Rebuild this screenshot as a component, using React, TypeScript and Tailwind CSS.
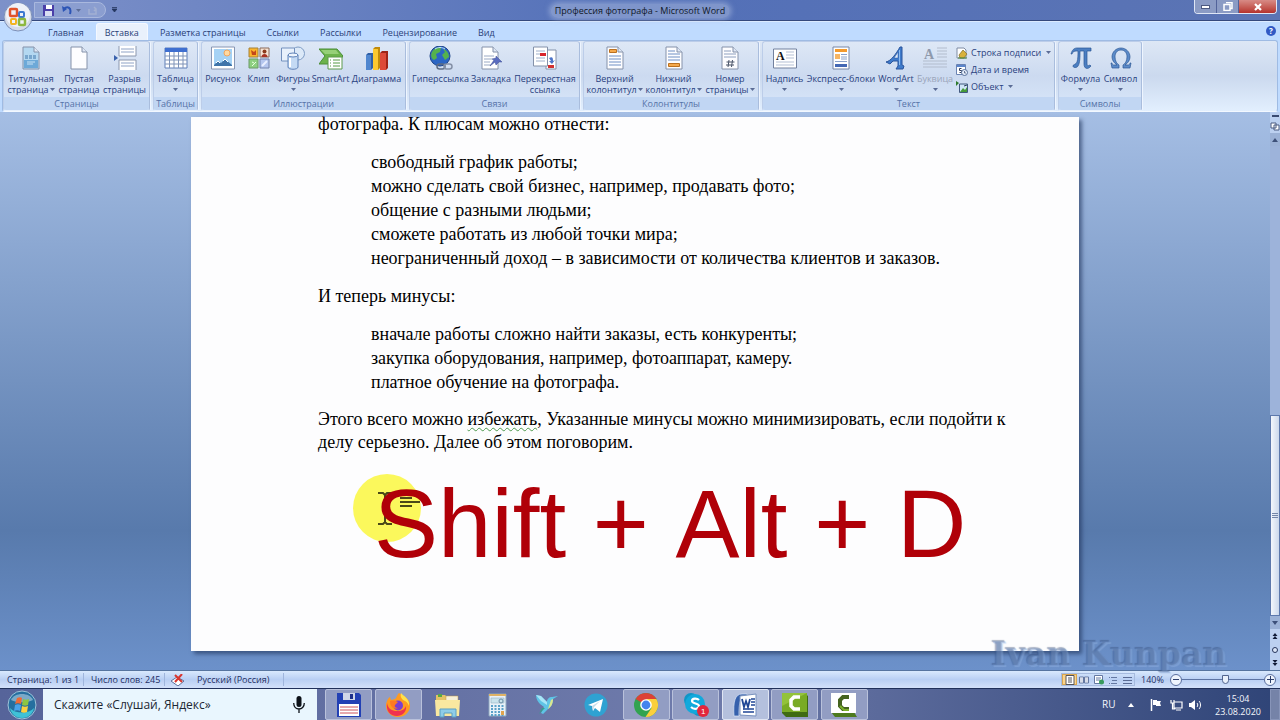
import React, { useState } from "react";

type RibbonItem = {
  icon: React.ReactNode;
  lines: string[];
  width: string;
  arrow?: boolean;
  disabled?: boolean;
};

type RibbonGroupProps = {
  title: string;
  items: RibbonItem[];
  children?: React.ReactNode;
};

/* ---------- Ribbon icons ---------- */

const Svg: React.FC<{ children: React.ReactNode }> = ({ children }) => (
  <svg viewBox="0 0 24 24" className="w-6 h-6" aria-hidden="true">
    {children}
  </svg>
);

const Sheet: React.FC<{ fill?: string; children?: React.ReactNode }> = ({
  fill = "#fdfdff",
  children,
}) => (
  <Svg>
    <path d="M4 1h11l5 5v17H4z" fill={fill} stroke="#8592aa" />
    <path d="M15 1v5h5" fill="#dfe7f5" stroke="#8592aa" />
    {children}
  </Svg>
);

const CoverIcon = () => (
  <Sheet fill="#b4d8f1">
    <path d="M5 14h14v8H5z" fill="#6da9d8" />
    <path d="M6 10h12M6 12h12" stroke="#3f76ab" strokeDasharray="3 1" />
    <path d="M8 16h8M8 18h6" stroke="#c9e2f5" />
  </Sheet>
);

const BreakIcon = () => (
  <Svg>
    <path d="M6 0v10h17V0M6 24V14h17v10" fill="#fff" stroke="#8b97ae" />
    <path d="M8 3h13M8 6h13M8 17h13M8 20h13" stroke="#8fa3c6" />
    <path d="M1 9l4 3-4 3z" fill="#3a62ad" />
  </Svg>
);

const TableIcon = () => (
  <Svg>
    <path d="M1 2h22v20H1z" fill="#fff" stroke="#5f7fb8" />
    <path d="M1 2h22v4H1z" fill="#3f6fd0" />
    <path d="M1 10h22M1 14h22M1 18h22M5.500 6v16M10 6v16M14.500 6v16M19 6v16" stroke="#7e93b8" />
  </Svg>
);

const PictureIcon = () => (
  <Svg>
    <path d="M.5 1h23v22H.5z" fill="#fff" stroke="#8896b3" />
    <path d="M3 3h18v17H3z" fill="#a5d2f5" />
    <circle cx="16" cy="7" r="3" fill="#ffd9a0" stroke="#f2a65e" />
    <path d="M3 19l4-4 3 2 4-4 7 6v1H3z" fill="#3f74a9" />
    <path d="M5 17l2-2 2 2M12 15l2-2 3 3" stroke="#fff" fill="none" />
  </Svg>
);

const ClipIcon = () => (
  <Svg>
    <path d="M2 2h9v9H2z" fill="#fbb52d" stroke="#a5823b" />
    <path d="M4 4l3 2 2-2v5H5z" fill="#c3471b" />
    <path d="M13 2h9v9h-9z" fill="#f5e3d3" stroke="#8b6a5a" />
    <circle cx="17.500" cy="5.500" r="2" fill="#8c3b1c" />
    <path d="M14.500 11c0-4 6-4 6 0z" fill="#a83222" />
    <path d="M2 13h9v9H2z" fill="#8dcf80" stroke="#6d9a68" />
    <path d="M5 20l4-4M5 16l2 1" stroke="#e8ffe0" />
    <path d="M13 13h9v9h-9z" fill="#b5c6ee" stroke="#7484ad" />
    <path d="M15 20l5-5" stroke="#e9efff" strokeWidth="2" />
  </Svg>
);

const ShapesIcon = () => (
  <Svg>
    <circle cx="17" cy="7.500" r="6.500" fill="#dce9f8" stroke="#7f9cc4" />
    <path d="M.5 2h13v13H.5z" fill="#e8f1fc" stroke="#7390bd" />
    <path d="M7 9v12c0 3 10 3 10 0V9" fill="#c4daf4" stroke="#5f82b8" />
    <ellipse cx="12" cy="9" rx="5" ry="2" fill="#eef5fd" stroke="#5f82b8" />
    <path d="M9 12v9" stroke="#fff" strokeWidth="2" />
  </Svg>
);

const SmartArtIcon = () => (
  <Svg>
    <path d="M0 3h18l6 7-6 8H0l6-8z" fill="#6cb34c" stroke="#4a8d35" />
    <path d="M2 4h15l3 4H6z" fill="#96d078" />
    <path d="M9 11h14v12H9z" fill="#fff" stroke="#5d9a4c" />
    <path d="M11 14h1M14 14h7M11 17h1M14 17h7M11 20h1M14 20h7" stroke="#559a45" />
  </Svg>
);

const ChartIcon = () => (
  <Svg>
    <path d="M1 9l2-2h5v15l-2 2H1z" fill="#2f5fa5" />
    <path d="M1 9h5v15H1z" fill="#4f86cf" />
    <path d="M8 3l2-2h5v21l-2 2H8z" fill="#c28b0a" />
    <path d="M8 3h5v21H8z" fill="#fbc930" />
    <path d="M15 7l2-2h6v17l-2 2h-6z" fill="#9e2317" />
    <path d="M15 7h6v17h-6z" fill="#dd4938" />
  </Svg>
);

const LinkIcon = () => (
  <Svg>
    <circle cx="11" cy="10" r="10" fill="#2c66c4" stroke="#20468a" />
    <path d="M3 6c3-5 7-5 9-4l-1 4-4 2 1 4-3 2C3 13 1 10 3 6zM14 3c4 1 6 5 6 8l-4 3-3-5 3-3z" fill="#55b24c" />
    <path d="M6 3c3-2 7-2 10 0" stroke="#bfe3ff" fill="none" />
    <rect x="8" y="18" width="8" height="5" rx="2.500" fill="none" stroke="#5e6c83" strokeWidth="1.500" />
    <rect x="15" y="18" width="8" height="5" rx="2.500" fill="none" stroke="#8490a6" strokeWidth="1.500" />
  </Svg>
);

const BookmarkIcon = () => (
  <Svg>
    <path d="M3 1h11l5 5v17H3z" fill="#fff" stroke="#8592aa" />
    <path d="M14 1v5h5" fill="#dfe7f5" stroke="#8592aa" />
    <path d="M5 10h10M5 13h8M5 16h6M5 19h7" stroke="#9aa9c4" />
    <path d="M17 10l6 6-3 0-3 3-1-3-5 4 4-6-2-1 4-1z" fill="#5a6cc0" stroke="#3d4c95" strokeWidth=".5" />
  </Svg>
);

const CrossRefIcon = () => (
  <Svg>
    <path d="M13 4h10v19H13z" fill="#fff" stroke="#8592aa" />
    <path d="M16 12c4-2 4 1 4 3l2-1-3 4-3-3 2 0" fill="#4d74c9" />
    <path d="M15 19h6v3h-6z" fill="#d03030" />
    <path d="M.5 1h14v19H.5z" fill="#fff" stroke="#8592aa" />
    <path d="M3 5h9M3 12h9M3 15h9M3 8h4" stroke="#9fb0cb" />
    <path d="M7 7h6v3H7z" fill="#d8262c" />
  </Svg>
);

const HeaderIcon = () => (
  <Sheet>
    <path d="M6.500 3.500h7v3h-7z" fill="#f5a94c" stroke="#bb701f" />
    <path d="M6 10h12M6 13h12M6 16h12M6 19h12" stroke="#6f8fc4" />
  </Sheet>
);

const FooterIcon = () => (
  <Sheet>
    <path d="M6 5h7M6 8h12M6 11h12M6 14h12" stroke="#6f8fc4" />
    <path d="M6.500 17.500h11v3h-11z" fill="#f5a94c" stroke="#bb701f" />
  </Sheet>
);

const PageNumberIcon = () => (
  <Sheet>
    <path d="M6 5h7M6 8h12M6 11h12" stroke="#8ea0bf" />
    <path d="M11 14l-1 7M14.500 14l-1 7M8.500 16h8M8 19h8" stroke="#4a5468" fill="none" />
  </Sheet>
);

const TextBoxIcon = () => (
  <Svg>
    <path d="M.5 3h23v19H.5z" fill="#fff" stroke="#72819e" />
    <path d="M13 6h8M13 9h8M13 12h8M3 16h18M3 19h18" stroke="#b3bfd4" />
    <text x="3" y="14" fontSize="12" fontWeight="bold" fontFamily="Liberation Serif, serif" fill="#111">
      А
    </text>
  </Svg>
);

const QuickPartsIcon = () => (
  <Svg>
    <path d="M4 1h16v22H4z" fill="#fff" stroke="#7687a8" />
    <path d="M6 3h12v3H6z" fill="#f39a2d" />
    <path d="M6 8h5v5H6z" fill="#f6b564" />
    <path d="M12 8.500h6M12 11h6M12 13h6M6 15.500h12" stroke="#8aa2cb" />
    <path d="M6 18h12v3H6z" fill="#4468b4" />
  </Svg>
);

const WordArtIcon = () => (
  <Svg>
    <path d="M2 16c5-1 10-8 14-15h2v18l2 1-1 3h-7l2-3v-5H9l-3 3z" fill="#3f7bcb" stroke="#2b559c" />
    <path d="M10 12h4V6z" fill="#e1ecfa" stroke="#2b559c" strokeWidth=".5" />
    <path d="M15.500 4v15" stroke="#8dbbf0" />
  </Svg>
);

const DropCapIcon = () => (
  <Svg>
    <path d="M14 2h10M14 5h10M14 8h10M14 11h10M0 15h24M0 18h24M0 21h24" stroke="#b2bccd" />
    <text x="1" y="13" fontSize="14" fontWeight="bold" fontFamily="Liberation Serif, serif" fill="#8e99ac">
      А
    </text>
  </Svg>
);

const PiIcon = () => (
  <Svg>
    <path
      d="M2 8c1-4 3-6 6-6h14v3h-4v13c0 2 1 2 3 1l1 1c-3 4-7 3-7-2V5h-4c0 6 0 12-2 15-1 2-5 2-5 0 0-2 3-1 4-4 1-3 1-7 1-11-3 0-5 0-6 3z"
      fill="#4c7fc2"
      stroke="#2d5795"
      strokeWidth=".7"
    />
  </Svg>
);

const OmegaIcon = () => (
  <Svg>
    <path
      d="M2 17h1c0 2 1 2 3 2h2c-3-2-5-5-5-8 0-5 4-9 9-9s9 4 9 9c0 3-2 6-5 8h2c2 0 3 0 3-2h1l-1 5h-7v-3c2-1 4-4 4-8 0-4-2-7-6-7s-6 3-6 7c0 4 2 7 4 8v3H3z"
      fill="#5c8bc9"
      stroke="#2d5795"
      strokeWidth=".7"
    />
  </Svg>
);

const SignatureIcon = () => (
  <svg viewBox="0 0 12 12" className="w-3 h-3" aria-hidden="true">
    <path d="M1 1h7l2 2v8H1z" fill="#fff" stroke="#7f8ba3" />
    <path d="M3 8l4-5 4 4-3 4H4z" fill="#d8b13c" stroke="#7c6a2a" strokeWidth=".7" />
    <path d="M2 11h9" stroke="#4d8a3d" />
  </svg>
);

const DateIcon = () => (
  <svg viewBox="0 0 12 12" className="w-3 h-3" aria-hidden="true">
    <path d="M.5.5h9v10h-9z" fill="#fff" stroke="#6a83b3" />
    <path d="M1 1h8v2H1z" fill="#5b85cc" />
    <path d="M5.500 4.500H3.500v2h2v2h-2" stroke="#2f3f60" fill="none" />
    <circle cx="8.500" cy="8.500" r="3" fill="#e4edfa" stroke="#587199" />
    <path d="M8.500 7v2h1.500" stroke="#33466b" fill="none" strokeWidth=".7" />
  </svg>
);

const ObjectIcon = () => (
  <svg viewBox="0 0 12 12" className="w-3 h-3" aria-hidden="true">
    <path d="M3.500 3h8v8.500h-8z" fill="#cfe5f7" stroke="#41597f" />
    <path d="M4 11l3-4 2 2 2-3v5z" fill="#469a38" />
    <path d="M0 0l3 2-3 3z" fill="#2d7a2c" />
    <path d="M8 5l3-1" stroke="#2c3e59" />
  </svg>
);

/* ---------- Ribbon data ---------- */

const tabs = [
  "Главная",
  "Вставка",
  "Разметка страницы",
  "Ссылки",
  "Рассылки",
  "Рецензирование",
  "Вид",
];

const pageItems: RibbonItem[] = [
  { icon: <CoverIcon />, lines: ["Титульная", "страница"], width: "w-[52px]", arrow: true },
  { icon: <Sheet />, lines: ["Пустая", "страница"], width: "w-[44px]" },
  { icon: <BreakIcon />, lines: ["Разрыв", "страницы"], width: "w-[47px]" },
];

const tableItems: RibbonItem[] = [
  { icon: <TableIcon />, lines: ["Таблица"], width: "w-[41px]", arrow: true },
];

const pictureItems: RibbonItem[] = [
  { icon: <PictureIcon />, lines: ["Рисунок"], width: "w-[40px]" },
  { icon: <ClipIcon />, lines: ["Клип"], width: "w-[31px]" },
  { icon: <ShapesIcon />, lines: ["Фигуры"], width: "w-[38px]", arrow: true },
  { icon: <SmartArtIcon />, lines: ["SmartArt"], width: "w-[37px]" },
  { icon: <ChartIcon />, lines: ["Диаграмма"], width: "w-[55px]" },
];

const linkItems: RibbonItem[] = [
  { icon: <LinkIcon />, lines: ["Гиперссылка"], width: "w-[59px]" },
  { icon: <BookmarkIcon />, lines: ["Закладка"], width: "w-[42px]" },
  { icon: <CrossRefIcon />, lines: ["Перекрестная", "ссылка"], width: "w-[66px]" },
];

const headerItems: RibbonItem[] = [
  { icon: <HeaderIcon />, lines: ["Верхний", "колонтитул"], width: "w-[59px]", arrow: true },
  { icon: <FooterIcon />, lines: ["Нижний", "колонтитул"], width: "w-[59px]", arrow: true },
  { icon: <PageNumberIcon />, lines: ["Номер", "страницы"], width: "w-[54px]", arrow: true },
];

const textItems: RibbonItem[] = [
  { icon: <TextBoxIcon />, lines: ["Надпись"], width: "w-[41px]", arrow: true },
  { icon: <QuickPartsIcon />, lines: ["Экспресс-блоки"], width: "w-[72px]", arrow: true },
  { icon: <WordArtIcon />, lines: ["WordArt"], width: "w-[38px]", arrow: true },
  { icon: <DropCapIcon />, lines: ["Буквица"], width: "w-[40px]", arrow: true, disabled: true },
];

const symbolItems: RibbonItem[] = [
  { icon: <PiIcon />, lines: ["Формула"], width: "w-[41px]", arrow: true },
  { icon: <OmegaIcon />, lines: ["Символ"], width: "w-[39px]", arrow: true },
];

const smallItems = [
  { icon: <SignatureIcon />, label: "Строка подписи", arrow: true },
  { icon: <DateIcon />, label: "Дата и время", arrow: false },
  { icon: <ObjectIcon />, label: "Объект", arrow: true },
];

/* ---------- Ribbon ---------- */

const Arrow = () => (
  <svg viewBox="0 0 5 3" className="w-[5px] h-[3px] shrink-0" aria-hidden="true">
    <path d="M0 0h5L2.500 3z" fill="#5b6c96" />
  </svg>
);

const RibbonButton: React.FC<{ item: RibbonItem }> = ({ item }) => {
  const { icon, lines, width, arrow, disabled } = item;
  return (
    <button
      type="button"
      disabled={disabled}
      className={`${width} flex flex-col items-center shrink-0 pt-1 whitespace-nowrap ${
        disabled ? "text-[#9aa5ba]" : "text-[#2a4280]"
      }`}
    >
      {icon}
      <span className="mt-[3px] leading-[11px]">{lines[0]}</span>
      <span className="flex items-center gap-px h-[11px] leading-[11px]">
        {lines[1]}
        {arrow && <Arrow />}
      </span>
    </button>
  );
};

const RibbonGroup: React.FC<RibbonGroupProps> = ({ title, items, children }) => (
  <section className="flex flex-col rounded-[3px] border border-[#bccde9] border-r-[#a9bddd] border-b-[#e8f1fd] bg-linear-to-b from-[#dee8f6] via-[#ccdaf0] to-[#d8e7fa] overflow-hidden shadow-[1px_0_0_#eef5ff]">
    <div className="flex flex-1 min-h-0 px-px">
      {items.map((item) => (
        <RibbonButton key={item.lines.join(" ")} item={item} />
      ))}
      {children}
    </div>
    <h2 className="h-[13px] shrink-0 bg-[#c1d6f3] text-center leading-[13px] text-[#5673a8]">{title}</h2>
  </section>
);

/* ---------- Taskbar icons ---------- */

const AppSvg: React.FC<{ children: React.ReactNode }> = ({ children }) => (
  <svg viewBox="0 0 26 26" className="w-[26px] h-[26px]" aria-hidden="true">
    {children}
  </svg>
);

const taskButtons = [
  {
    name: "Total Commander",
    open: true,
    icon: (
      <AppSvg>
        <path d="M1 1h22l2 2v22H1z" fill="#2240b4" />
        <path d="M7 1h12v7H7z" fill="#cfd6e8" />
        <path d="M14 2h3v5h-3z" fill="#1d2f8a" />
        <path d="M3 12h20v12H3z" fill="#fff" />
        <path d="M4 15h18M4 18h18M4 21h18" stroke="#d0555c" />
      </AppSvg>
    ),
  },
  {
    name: "Firefox",
    open: true,
    icon: (
      <AppSvg>
        <path d="M14 1c7 4 11 7 11 13a12 11 0 0 1-24 0c0-4 2-8 4-9l1 3 4-1c1 0 2-4 4-6z" fill="#ff9a1f" />
        <path d="M16 1c2 3 9 5 8 13-1-3-3-5-6-6-2-2-3-4-2-7z" fill="#ffe04a" />
        <path d="M2 11c1 6 5 8 10 8s8-2 9-5c1 6-4 10-9 10C5 24 1 19 2 11z" fill="#f0324f" />
        <circle cx="13" cy="13.500" r="5" fill="#7a3fd0" />
        <path d="M5 9c4-1 6 0 8 1l-3 3c-1 2 1 3 3 3-4 2-8-1-8-7z" fill="#ff7a22" />
      </AppSvg>
    ),
  },
  {
    name: "Проводник",
    open: false,
    icon: (
      <AppSvg>
        <path d="M1 3h9l2 2h11v19H1z" fill="#e3c365" />
        <path d="M3 2h4v3H3z" fill="#58a945" />
        <path d="M11 4h12v5H11z" fill="#f6f0d9" stroke="#c09b46" strokeWidth=".5" />
        <path d="M0 8h25l-1 16H1z" fill="#f9e8a0" />
        <path d="M5 25v-8h16v8h-4v-4H9v4z" fill="#8fcde8" stroke="#5ba0c4" />
      </AppSvg>
    ),
  },
  {
    name: "Калькулятор",
    open: false,
    icon: (
      <AppSvg>
        <path d="M5 2h17v22H5z" fill="#e8f1f8" stroke="#8da6bd" />
        <path d="M5 2h17v2H5z" fill="#dfb265" />
        <path d="M7 6h13v5H7z" fill="#c9e3ec" stroke="#88a5b8" strokeWidth=".5" />
        <circle cx="17" cy="9" r="2" fill="none" stroke="#6b8da5" />
        <path d="M7 14h13M7 17h13M7 20h13M7 23h13" stroke="#5aa0c8" strokeWidth="2" strokeDasharray="2 1.500" />
        <path d="M17 19h3v4h-3z" fill="#e0a44e" />
      </AppSvg>
    ),
  },
  {
    name: "Колибри",
    open: false,
    icon: (
      <AppSvg>
        <path d="M2 3l5 1 6 6c0-3 2-5 5-5l6-1-5 3c0 5-2 8-5 10l-5 5-2-1 3-6-4-3C4 10 2 7 2 3z" fill="#5fc4e6" />
        <path d="M2 3l5 1 6 6 0 3-6-4z" fill="#a9e6f7" />
        <path d="M17 8l2-1c0 5-2 8-5 10z" fill="#dbe68d" />
        <path d="M11 16l-6 6 3-6z" fill="#35a08d" />
      </AppSvg>
    ),
  },
  {
    name: "Telegram",
    open: false,
    icon: (
      <AppSvg>
        <circle cx="13" cy="13" r="11.500" fill="#2fa2d2" />
        <path d="M5 13l15-6-3 13-5-4-2 3-1-5z" fill="#fff" />
        <path d="M9 14l8-5-6 6-1 4z" fill="#c5dcea" />
      </AppSvg>
    ),
  },
  {
    name: "Chrome",
    open: true,
    icon: (
      <AppSvg>
        <circle cx="13" cy="13" r="12" fill="#31a350" />
        <path d="M13 13L2.600 7A12 12 0 0 1 23.400 7z" fill="#dd4136" />
        <path d="M13 7h10.400A12 12 0 0 1 12.500 25l6-9z" fill="#fbcf3b" />
        <circle cx="13" cy="13" r="5.800" fill="#fff" />
        <circle cx="13" cy="13" r="4.400" fill="#4484ee" />
      </AppSvg>
    ),
  },
  {
    name: "Skype",
    open: true,
    icon: (
      <AppSvg>
        <circle cx="8" cy="8" r="7" fill="#0f96c7" />
        <circle cx="16" cy="17" r="7" fill="#0f96c7" />
        <circle cx="12" cy="12" r="10" fill="#12a9dc" />
        <path d="M16 8c-2-2-7-2-7 1s7 2 7 5-5 4-8 1" stroke="#fff" strokeWidth="2.200" fill="none" />
        <circle cx="20" cy="19" r="6" fill="#e3263c" />
        <text x="18" y="22" fontSize="8" fontFamily="Liberation Sans, sans-serif" fill="#fff">
          1
        </text>
      </AppSvg>
    ),
  },
  {
    name: "Word",
    open: true,
    icon: (
      <AppSvg>
        <path d="M2 24C1 10 3 2 10 2h5v3c-7 0-8 4-8 19z" fill="#3560ac" stroke="#dbe6f8" strokeWidth=".7" />
        <path d="M8 4l16-2v22l-16-1z" fill="#fff" stroke="#7790bd" />
        <path d="M10 7l2 8 2-6 2 6 2-8" stroke="#1f4695" strokeWidth="1.800" fill="none" />
        <path d="M19 7h4M19 10h4M19 13h4M11 17h11M11 20h11" stroke="#1f4695" strokeWidth="1.500" />
      </AppSvg>
    ),
  },
  {
    name: "Camtasia",
    open: true,
    icon: (
      <AppSvg>
        <path d="M0 1h22l4 3v21H4l-4-4z" fill="#3f6b12" />
        <path d="M0 1h25v19H0z" fill="#79ab25" />
        <path d="M0 1h25L0 14z" fill="#93c23a" />
        <path d="M18 5h-6l-3 3v6l3 3h6" stroke="#fff" strokeWidth="3.500" fill="none" />
      </AppSvg>
    ),
  },
  {
    name: "Camtasia Recorder",
    open: true,
    icon: (
      <AppSvg>
        <path d="M0 20l4 5h22l-3-5z" fill="#4c7a1d" />
        <path d="M0 1h25v20H0z" fill="#fff" />
        <path d="M18 5h-6l-3 3v6l3 3h6" stroke="#45631f" strokeWidth="4" fill="none" />
        <path d="M9 14l4 4h5" stroke="#7bb02a" strokeWidth="2" fill="none" />
      </AppSvg>
    ),
  },
];

/* ---------- Window parts ---------- */

const TitleBar = () => (
  <header className="relative h-5 shrink-0 flex items-start bg-linear-to-r from-[#7d91c9] via-[#5370b8] to-[#5b74b4]">
    <button type="button" aria-label="Кнопка Office" className="absolute z-10 left-[3px] top-[2px] w-[30px] h-[30px]">
      <svg viewBox="0 0 30 30" className="w-full h-full">
        <circle cx="15" cy="15" r="14" fill="#d5dbe8" stroke="#7b8fb8" />
        <circle cx="15" cy="13" r="12" fill="#eef1f8" />
        <rect x="7" y="7" width="7" height="7" rx="1" fill="none" stroke="#e0532a" strokeWidth="2.500" />
        <rect x="16" y="10" width="5" height="5" rx="1" fill="none" stroke="#3d78d0" strokeWidth="2" />
        <rect x="8" y="17" width="5" height="5" rx="1" fill="none" stroke="#f3b31e" strokeWidth="2" />
        <rect x="16" y="17" width="6" height="6" rx="1" fill="none" stroke="#8db83f" strokeWidth="2.500" />
      </svg>
    </button>
    <div className="ml-[34px] mt-[2px] pl-2 pr-2 h-4 w-[72px] flex items-center justify-between rounded-r-full border border-[#a9b8de] bg-[#8b9ed0]">
      <button type="button" aria-label="Сохранить">
        <svg viewBox="0 0 11 11" className="w-[11px] h-[11px]">
          <path d="M0 0h11v11H0z" fill="#4a3fa8" />
          <path d="M3 0h6v4H3z" fill="#fff" />
          <path d="M2 6h7v5H2z" fill="#d9def2" />
        </svg>
      </button>
      <button type="button" aria-label="Отменить" className="flex items-center gap-1">
        <svg viewBox="0 0 10 10" className="w-[10px] h-[10px]">
          <path d="M2 4c3-3 8-2 6 5" fill="none" stroke="#2d55b5" strokeWidth="2" />
          <path d="M0 1l1 6 4-3z" fill="#2d55b5" />
        </svg>
        <Arrow />
      </button>
      <button type="button" aria-label="Вернуть">
        <svg viewBox="0 0 9 9" className="w-[9px] h-[9px]">
          <path d="M1 3v5h7V3M6 1l2 2-2 2" fill="none" stroke="#a3b0d2" strokeWidth="1.500" />
        </svg>
      </button>
    </div>
    <button type="button" aria-label="Настройка панели" className="ml-[6px] mt-[7px]">
      <svg viewBox="0 0 5 5" className="w-[5px] h-[5px]">
        <path d="M0 .5h5M0 2h5L2.500 5z" stroke="#24365f" strokeWidth=".8" fill="#24365f" />
      </svg>
    </button>
    <h1 className="absolute left-1/2 top-1 -translate-x-1/2 px-1 leading-[14px] text-[#101828] rounded-full bg-[#a9b9de]/50 shadow-[0_0_5px_2px_rgba(176,192,228,0.5)] whitespace-nowrap">
      Профессия фотографа - Microsoft Word
    </h1>
    <div className="ml-auto mr-[3px] flex h-[14px] rounded-b border border-t-0 border-[#dfe6f5] overflow-hidden">
      <button type="button" aria-label="Свернуть" className="w-[22px] flex items-center justify-center bg-[#8b9bc4] border-r border-[#52639a]">
        <span className="w-[9px] h-[4px] bg-white border border-[#4d5a80]" />
      </button>
      <button type="button" aria-label="Развернуть" className="w-[22px] flex items-center justify-center bg-[#8b9bc4] border-r border-[#52639a]">
        <svg viewBox="0 0 10 9" className="w-[10px] h-[9px]">
          <path d="M3 .5h6v6H7M1 2.500h6v6H1z" fill="none" stroke="#fff" strokeWidth="1.500" />
        </svg>
      </button>
      <button type="button" aria-label="Закрыть" className="w-[37px] flex items-center justify-center bg-linear-to-b from-[#d78b86] to-[#b5302c]">
        <svg viewBox="0 0 8 8" className="w-2 h-2">
          <path d="M1 1l6 6M7 1L1 7" stroke="#fff" strokeWidth="2.200" />
        </svg>
      </button>
    </div>
  </header>
);

const Ribbon = () => {
  const [active, setActive] = useState("Вставка");

  return (
    <div className="shrink-0 bg-[#bfdbff] border-t border-[#35497c]">
      <nav className="flex items-end h-[19px] pl-[39px] pr-1 gap-[3px] border-t border-[#dcebff] text-[#2b3f78]">
        {tabs.map((tab) => (
          <button
            key={tab}
            type="button"
            onClick={() => setActive(tab)}
            className={`h-[17px] px-2 leading-[15px] border border-b-0 rounded-t-[3px] ${
              tab === active ? "bg-[#e9f1fc] border-[#f4f8ff]" : "border-transparent"
            }`}
          >
            {tab}
          </button>
        ))}
        <button type="button" aria-label="Справка" className="ml-auto mb-1 w-[10px] h-[10px] rounded-full bg-[#3159c4] text-white text-[8px] leading-[10px] font-bold">
          ?
        </button>
      </nav>
      <div className="mx-[2px] flex h-[72px] gap-[3px] rounded-[3px] border border-[#9fbbe3] border-b-[#f2f8ff] bg-linear-to-b from-[#dde7f5] via-[#cbd9ee] to-[#e2effe]">
        <RibbonGroup title="Страницы" items={pageItems} />
        <RibbonGroup title="Таблицы" items={tableItems} />
        <RibbonGroup title="Иллюстрации" items={pictureItems} />
        <RibbonGroup title="Связи" items={linkItems} />
        <RibbonGroup title="Колонтитулы" items={headerItems} />
        <RibbonGroup title="Текст" items={textItems}>
          <div className="flex flex-col w-[98px] pl-px pt-[2px] text-[#2a4280]">
            {smallItems.map((item) => (
              <button key={item.label} type="button" className="flex items-center gap-[3px] h-[17px] whitespace-nowrap">
                {item.icon}
                {item.label}
                {item.arrow && (
                  <span className="pl-[2px]">
                    <Arrow />
                  </span>
                )}
              </button>
            ))}
          </div>
        </RibbonGroup>
        <RibbonGroup title="Символы" items={symbolItems} />
      </div>
    </div>
  );
};

const DocumentPage = () => (
  <article className="relative mx-auto w-[888px] mt-[5px] mb-[19px] pl-[127px] pr-[60px] bg-[#fdfdfe] shadow-[3px_3px_4px_rgba(35,55,95,0.65)] font-['Liberation_Serif',serif] text-[18px] leading-6 text-black">
    <p className="-mt-[5px] mb-[14px]">фотографа. К плюсам можно отнести:</p>
    <ul className="pl-[53px] mb-[14px]">
      <li>свободный график работы;</li>
      <li>можно сделать свой бизнес, например, продавать фото;</li>
      <li>общение с разными людьми;</li>
      <li>сможете работать из любой точки мира;</li>
      <li>неограниченный доход – в зависимости от количества клиентов и заказов.</li>
    </ul>
    <p className="mb-[14px]">И теперь минусы:</p>
    <ul className="pl-[53px] mb-[14px]">
      <li>вначале работы сложно найти заказы, есть конкуренты;</li>
      <li>закупка оборудования, например, фотоаппарат, камеру.</li>
      <li>платное обучение на фотографа.</li>
    </ul>
    <p className="leading-[23px]">
      Этого всего можно{" "}
      <span className="underline decoration-wavy decoration-[#4d9a4d] decoration-1 underline-offset-2">избежать</span>,
      Указанные минусы можно минимизировать, если подойти к делу серьезно. Далее об этом поговорим.
    </p>

    {/* Mouse highlight and shortcut caption */}
    <div className="absolute left-[162px] top-[357px] w-[68px] h-[68px] rounded-full bg-[#fbf85c]">
      <svg viewBox="0 0 68 68" className="w-full h-full overflow-visible" aria-hidden="true">
        <path d="M25 19h5l2 2 2-2h5M25 50h5l2-2 2 2h5M32 21v27" fill="none" stroke="#4a4818" strokeWidth="2" />
        <path d="M47 24h12M47 28h20M47 32h12" stroke="#4a4818" strokeWidth="2" />
      </svg>
    </div>
    <p className="absolute left-[183px] top-[352px] font-['Liberation_Sans',sans-serif] text-[96px] leading-[110px] [font-kerning:none] text-[#b00008] whitespace-nowrap">
      Shift + Alt + D
    </p>
  </article>
);

const ScrollBar = () => (
  <aside className="w-[10px] shrink-0 flex flex-col items-center bg-[#bcd0f0] text-[#1d2c52]">
    <span className="mt-[3px] w-[7px] h-[2px] bg-[#3a4a70]" />
    <button type="button" aria-label="Линейка" className="mt-1">
      <svg viewBox="0 0 10 10" className="w-[10px] h-[10px]">
        <path d="M1 2h5v5H1zM4 4h5v5H4z" fill="#fff" stroke="#4b5b80" />
      </svg>
    </button>
    <button type="button" aria-label="Вверх" className="mt-[2px] w-full h-[13px] flex items-center justify-center bg-[#9bb1d6]">
      <svg viewBox="0 0 6 4" className="w-[6px] h-1">
        <path d="M0 4h6L3 0z" fill="#3d5079" />
      </svg>
    </button>
    <div className="flex-1 w-full bg-[#9db3da]" />
    <div className="w-full h-[201px] flex flex-col items-center justify-center gap-px border border-[#5d78ac] bg-linear-to-r from-[#f4f7fc] to-[#ccd8ec]">
      <span className="w-[6px] h-px bg-[#7385a8]" />
      <span className="w-[6px] h-px bg-[#7385a8]" />
      <span className="w-[6px] h-px bg-[#7385a8]" />
    </div>
    <button type="button" aria-label="Вниз" className="w-full h-[13px] flex items-center justify-center bg-[#9bb1d6]">
      <svg viewBox="0 0 6 4" className="w-[6px] h-1">
        <path d="M0 0h6L3 4z" fill="#3d5079" />
      </svg>
    </button>
    <button type="button" aria-label="Предыдущая страница" className="h-[14px] flex items-center">
      <svg viewBox="0 0 6 6" className="w-[6px] h-[6px]">
        <path d="M3 0l2.500 3h-5zM3 3l2.500 3h-5z" fill="#111c38" />
      </svg>
    </button>
    <button type="button" aria-label="Выбор объекта" className="h-[13px] flex items-center">
      <span className="w-[6px] h-[6px] rounded-full border border-[#26355c] bg-[#dce7f8]" />
    </button>
    <button type="button" aria-label="Следующая страница" className="h-[14px] flex items-center">
      <svg viewBox="0 0 6 6" className="w-[6px] h-[6px]">
        <path d="M3 3L.5 0h5zM3 6L.5 3h5z" fill="#111c38" />
      </svg>
    </button>
  </aside>
);

const StatusBar = () => {
  const [zoom, setZoom] = useState(53);

  return (
    <footer className="shrink-0 h-[18px] flex items-center border-t border-[#56749f] bg-linear-to-b from-[#d9e9fd] via-[#b9cff3] to-[#d3e1fa] text-[#1f2f63] whitespace-nowrap">
      <span className="w-[84px] pl-[7px] border-r border-[#9fb5dc]">Страница: 1 из 1</span>
      <span className="w-[81px] pl-[7px] border-r border-[#9fb5dc]">Число слов: 245</span>
      <button type="button" aria-label="Правописание" className="ml-[6px] w-[14px]">
        <svg viewBox="0 0 14 12" className="w-[14px] h-3">
          <path d="M0 7l6-4 7 4-6 5z" fill="#fff" stroke="#5c6f9c" />
          <path d="M4 1l7 7M11 0L4 8" stroke="#d8362f" strokeWidth="2" />
        </svg>
      </button>
      <span className="w-[87px] ml-3 border-r border-[#9fb5dc]">Русский (Россия)</span>
      <div className="ml-auto flex h-[13px] border border-[#a6bbdf]">
        <button type="button" aria-label="Разметка страницы" className="w-[15px] flex items-center justify-center bg-[#fbd48a] border border-[#d9a650]">
          <svg viewBox="0 0 10 10" className="w-[10px] h-[10px]">
            <path d="M1 .5h8v9H1z" fill="#fff" stroke="#54545c" />
            <path d="M3 3h4M3 5h4M3 7h4" stroke="#54545c" />
          </svg>
        </button>
        <button type="button" aria-label="Режим чтения" className="w-[14px] flex items-center justify-center">
          <svg viewBox="0 0 10 8" className="w-[10px] h-2">
            <path d="M.5 1h4v6h-4zM5.500 1h4v6h-4z" fill="#fff" stroke="#6478a2" />
            <path d="M1 3h3M1 5h3M6 3h3M6 5h3" stroke="#8c9cc0" strokeWidth=".7" />
          </svg>
        </button>
        <button type="button" aria-label="Веб-документ" className="w-[15px] flex items-center justify-center">
          <svg viewBox="0 0 10 10" className="w-[10px] h-[10px]">
            <path d="M.5.5h8v8h-8z" fill="#fff" stroke="#6478a2" />
            <path d="M2 3h5M2 5h4" stroke="#6478a2" />
            <circle cx="7.500" cy="7" r="2.500" fill="#389a5d" />
          </svg>
        </button>
        <button type="button" aria-label="Структура" className="w-[14px] flex items-center justify-center">
          <svg viewBox="0 0 8 8" className="w-2 h-2">
            <path d="M0 1.500h1M2 1.500h6M3 4.500h5M2 7.500h6M0 7.500h1" stroke="#6478a2" />
          </svg>
        </button>
        <button type="button" aria-label="Черновик" className="w-[14px] flex items-center justify-center">
          <svg viewBox="0 0 9 8" className="w-[9px] h-2">
            <path d="M0 1.500h9M0 4.500h9M0 7.500h9" stroke="#5a6b94" />
          </svg>
        </button>
      </div>
      <label htmlFor="zoom" className="w-[29px] ml-[6px]">
        140%
      </label>
      <button type="button" aria-label="Уменьшить" onClick={() => setZoom(zoom - 5)} className="w-[12px] h-[12px] flex items-center justify-center rounded-full border border-[#5a6f9f] bg-[#eef4fd]">
        <span className="w-[6px] h-px bg-[#2d3f6c]" />
      </button>
      <input
        id="zoom"
        type="range"
        value={zoom}
        onChange={(e) => setZoom(Number(e.target.value))}
        className="w-[82px] h-px appearance-none bg-[#5d74a3] [&::-webkit-slider-thumb]:appearance-none [&::-webkit-slider-thumb]:w-[7px] [&::-webkit-slider-thumb]:h-[9px] [&::-webkit-slider-thumb]:rounded-b-full [&::-webkit-slider-thumb]:border [&::-webkit-slider-thumb]:border-[#51658f] [&::-webkit-slider-thumb]:bg-[#e9f0fb]"
      />
      <button type="button" aria-label="Увеличить" onClick={() => setZoom(zoom + 5)} className="w-[12px] h-[12px] mr-1 flex items-center justify-center rounded-full border border-[#5a6f9f] bg-[#eef4fd]">
        <svg viewBox="0 0 7 7" className="w-[7px] h-[7px]">
          <path d="M0 3.500h7M3.500 0v7" stroke="#2d3f6c" />
        </svg>
      </button>
    </footer>
  );
};

const Taskbar = () => (
  <div className="shrink-0 h-8 flex items-stretch border-t border-[#20305a] bg-linear-to-r from-[#56649a] via-[#6f7bab] via-55% to-[#2f4477]">
    <button type="button" aria-label="Пуск" className="w-[43px] flex items-center justify-center">
      <svg viewBox="0 0 30 30" className="w-[30px] h-[30px]">
        <circle cx="15" cy="15" r="14" fill="#256f9f" stroke="#9fc3d9" />
        <path d="M3 18c5 6 19 6 24 0-1 6-6 10-12 10S4 24 3 18z" fill="#3fc1d6" />
        <path d="M4 10c3-8 19-8 22 0-6 3-16 3-22 0z" fill="#7aa9c8" />
        <path d="M10 8c2-1 4-1 5 0l-1 6c-2-1-4-1-6 0z" fill="#ef6a36" />
        <path d="M16 9c2 1 4 1 6 0l-1 6c-2 1-4 1-6 0z" fill="#8dc641" />
        <path d="M8 15c2-1 4-1 6 0l-1 6c-2-1-4-1-6 0z" fill="#4aa3e8" />
        <path d="M15 16c2 1 4 1 6 0l-1 6c-2 1-4 1-6 0z" fill="#fcd03d" />
      </svg>
    </button>
    <div className="w-[274px] flex items-center bg-[#e9f6fe] pl-[11px] pr-3">
      <input
        type="text"
        aria-label="Поиск"
        placeholder="Скажите «Слушай, Яндекс»"
        className="flex-1 min-w-0 bg-transparent outline-none text-[12px] leading-4 placeholder:text-[#1c2733]"
      />
      <button type="button" aria-label="Голосовой поиск">
        <svg viewBox="0 0 12 17" className="w-3 h-[17px]">
          <rect x="3.500" y="0" width="5" height="11" rx="2.500" fill="#0c1118" />
          <path d="M.7 7c0 8 10.600 8 10.600 0M6 13v4" fill="none" stroke="#0c1118" strokeWidth="1.300" />
        </svg>
      </button>
    </div>
    <div className="ml-2 w-[543px] flex justify-between">
      {taskButtons.map((app) => (
        <button
          key={app.name}
          type="button"
          aria-label={app.name}
          className={`w-[47px] flex items-center justify-center rounded-[2px] border ${
            app.open
              ? app.name === "Word"
                ? "border-[#dfe5f3] bg-[#b4c0dd]"
                : "border-[#b9c1db] bg-[#929dc3]"
              : "border-transparent"
          }`}
        >
          {app.icon}
        </button>
      ))}
    </div>
    <div className="ml-auto flex items-center text-[#f4f7fc]">
      <span className="text-[10px] w-[26px]">RU</span>
      <svg viewBox="0 0 6 4" className="w-[6px] h-1 mr-4" aria-hidden="true">
        <path d="M0 4h6L3 0z" fill="#fff" />
      </svg>
      <svg viewBox="0 0 12 12" className="w-3 h-3 mr-2" aria-hidden="true">
        <path d="M1.500 0v12" stroke="#fff" strokeWidth="1.500" />
        <path d="M3 1h4v1h4l-1 2 1 3H6V6H3z" fill="#fff" />
      </svg>
      <svg viewBox="0 0 13 12" className="w-[13px] h-3 mr-[6px]" aria-hidden="true">
        <path d="M4 3h8v6H4zM6 11h5M1 1v3h3V1M2.500 4v6h3" fill="none" stroke="#fff" strokeWidth="1.200" />
      </svg>
      <svg viewBox="0 0 13 12" className="w-[13px] h-3" aria-hidden="true">
        <path d="M0 4h2l4-3v10L2 8H0z" fill="#fff" />
        <path d="M8 4c1 1 1 3 0 4M10 2c2 2 2 6 0 8" fill="none" stroke="#fff" />
      </svg>
      <time className="w-[56px] ml-2 mr-1 text-center leading-[13px]">
        15:04
        <br />
        23.08.2020
      </time>
      <button type="button" aria-label="Показать рабочий стол" className="w-[10px] h-full border border-[#8794b8] bg-[#7583a8]" />
    </div>
  </div>
);

const App: React.FC = () => (
  <div className="h-screen flex flex-col overflow-hidden font-['Open_Sans','Noto_Sans',sans-serif] text-[9px]">
    <TitleBar />
    <Ribbon />
    <div className="relative flex-1 min-h-0 flex bg-linear-to-b from-[#a5bee4] via-[#587aac] via-75% to-[#6c91ca]">
      <main className="flex-1 flex overflow-hidden">
        <DocumentPage />
      </main>
      <ScrollBar />
      {/* Author mark */}
      <p className="absolute right-[53px] -bottom-[3px] font-['DejaVu_Serif',serif] font-bold text-[33px] leading-[36px] text-[#6b8fc6]/30 [text-shadow:-1px_-1px_1px_rgba(50,72,115,0.4),1px_1px_1px_rgba(160,188,232,0.35)] whitespace-nowrap">
        Ivan Kunpan
      </p>
    </div>
    <StatusBar />
    <Taskbar />
  </div>
);

export default App;
